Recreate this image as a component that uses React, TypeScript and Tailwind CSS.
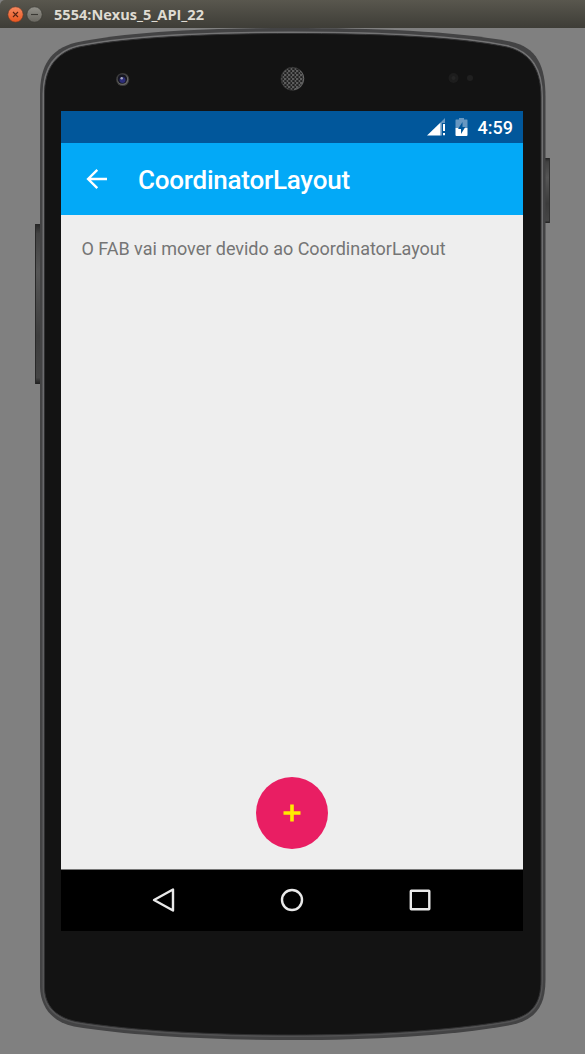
import type { ReactNode } from "react";

const BODY =
  "M40 94 C40 66 50 49 76 42.500 C130 31 215 28 292 28 C370 28 455 31 510 41.5 C537 47 545.5 66 545.5 97 V980 C545.5 1008 534 1020 511 1025 C450 1036 370 1040 292 1040 C214 1040 130 1036 74 1026.5 C52 1022 40.500 1007 40 987 Z";
const FACE =
  "M44.5 94 C44.5 71 54 53 79 47 C132 36.500 215 33.5 292 33.5 C370 33.5 453 36 507 47 C532 53 541 72 541 97 V980 C541 1005 531 1015.500 509 1020.500 C449 1031 370 1035 292 1035 C214 1035 132 1031 76 1021.500 C55 1017 44.500 1005 44.500 987 Z";

function DeviceShell() {
  return (
    <svg
      className="absolute left-0 top-0"
      width="585"
      height="1054"
      viewBox="0 0 585 1054"
      aria-hidden="true"
    >
      <defs>
        <linearGradient id="key" x1="0" y1="0" x2="0" y2="1">
          <stop offset="0" stopColor="#252525" />
          <stop offset=".06" stopColor="#424242" />
          <stop offset=".3" stopColor="#565656" />
          <stop offset=".7" stopColor="#3c3c3c" />
          <stop offset=".96" stopColor="#454545" />
          <stop offset="1" stopColor="#1f1f1f" />
        </linearGradient>
        <linearGradient id="rim" x1="0" y1="0" x2="0" y2="1">
          <stop offset="0" stopColor="#737374" />
          <stop offset=".4" stopColor="#69696c" />
          <stop offset="1" stopColor="#525253" />
        </linearGradient>
        <pattern id="mesh" width="4" height="4" patternUnits="userSpaceOnUse">
          <rect width="4" height="4" fill="#5c5c5c" />
          <rect x=".3" y=".3" width="2.300" height="1.500" fill="#101010" />
          <rect x="2.300" y="2.300" width="1.700" height="1.500" fill="#101010" />
        </pattern>
      </defs>
      <rect x="35" y="224" width="6" height="160" fill="url(#key)" />
      <rect x="35" y="224" width="1" height="160" fill="#292929" />
      <rect x="545" y="158" width="5" height="65" fill="url(#key)" />
      <rect x="549" y="158" width="1" height="65" fill="#303030" />
      <path d={BODY} fill="#434344" />
      <path d={FACE} fill="#131313" stroke="url(#rim)" strokeWidth="4" />
      <path d={FACE} fill="#131313" stroke="#303031" strokeWidth="1" />

      <circle cx="122.700" cy="79.500" r="6.600" fill="#3d3c3b" />
      <circle cx="122.700" cy="79.500" r="5.500" fill="#686765" />
      <circle cx="122.300" cy="79" r="4.800" fill="#171722" />
      <circle cx="122.500" cy="79.900" r="3" fill="#2d2d78" />
      <circle cx="121.700" cy="78.200" r="1.200" fill="#a6a8bd" />

      <circle cx="292.500" cy="78.800" r="11.500" fill="url(#mesh)" stroke="#353535" strokeWidth=".8" />
      <path d="M300 70.500 A11 11 0 0 1 294 89.500" fill="none" stroke="#777" strokeWidth=".8" />
      <circle cx="453.500" cy="78" r="5" fill="#1d1d1d" />
      <circle cx="453.500" cy="78" r="2" fill="#252525" />
      <circle cx="470" cy="78" r="3" fill="#202020" />
    </svg>
  );
}

function WindowButton({ close = false }: { close?: boolean }) {
  return (
    <svg width="17" height="17" viewBox="0 0 17 17">
      <defs>
        <linearGradient id={close ? "closeFill" : "minFill"} x1="0" y1="0" x2="0" y2="1">
          <stop stopColor={close ? "#f68a61" : "#92918a"} />
          <stop offset="1" stopColor={close ? "#e9561f" : "#696760"} />
        </linearGradient>
      </defs>
      <circle
        cx="8.500"
        cy="8.500"
        r="7.700"
        fill={close ? "url(#closeFill)" : "url(#minFill)"}
        stroke={close ? "#5d3526" : "#36352f"}
        strokeWidth=".6"
      />
      <path
        d={close ? "M6 6 L11 11 M11 6 L6 11" : "M5 8.500 H12"}
        stroke={close ? "#572413" : "#3a3934"}
        strokeWidth="1.100"
      />
    </svg>
  );
}

function NavButton({ label, children }: { label: string; children: ReactNode }) {
  return (
    <button aria-label={label} className="flex h-full w-32 items-center justify-center">
      <svg
        width="26"
        height="26"
        viewBox="0 0 26 26"
        fill="none"
        stroke="#e9e9e9"
        strokeWidth="2.400"
        strokeLinejoin="round"
      >
        {children}
      </svg>
    </button>
  );
}

export default function App() {
  return (
    <div className="relative h-[1054px] w-[585px] overflow-hidden bg-[#808080]">
      <DeviceShell />
      <div className="relative flex h-full flex-col">
        <header className="flex h-7 shrink-0 items-center gap-[2px] rounded-tl-[5px] bg-linear-to-b from-[#59574e] to-[#3e3d37] pl-[7px] pt-px">
          <WindowButton close />
          <WindowButton />
          <h1 className="ml-[9px] font-['Open_Sans',sans-serif] text-[14px] font-bold leading-7 text-[#dfdbd2]">
            <svg width="151" height="20" viewBox="0 0 151 20" className="block overflow-visible">
              <text x="0" y="15" textLength="150" lengthAdjust="spacingAndGlyphs" fill="currentColor">
                5554:Nexus_5_API_22
              </text>
            </svg>
          </h1>
        </header>

        <main className="ml-[61px] mt-[83px] flex h-[820px] w-[462px] flex-col bg-[#eeeeee] font-[Roboto,sans-serif]">
          <div className="flex h-8 shrink-0 items-center justify-end bg-[#01579b] pr-[10px] text-white">
            <svg width="20" height="18" viewBox="0 0 20 18">
              <path d="M13.500 4.500 L18 0 V5 H15 V17.500 H13.500 Z" fill="#6797c1" />
              <path d="M0 17.500 L13.500 4.500 V17.500 Z" fill="#fff" />
              <path d="M16 6 H18 V13 H16 Z M16 15 H18 V17.300 H16 Z" fill="#fff" />
            </svg>
            <svg width="13" height="20" viewBox="0 0 13 20" className="ml-[8px] mr-px">
              <path d="M4 1 H9 V2.500 H12 Q12.500 2.500 12.500 3.500 V11 H.5 V3.500 Q.5 2.500 1 2.500 H4 Z" fill="#6797c1" />
              <path d="M.5 11 H12.500 V18 Q12.500 19 11.500 19 H1.500 Q.5 19 .5 18 Z" fill="#fff" />
              <path d="M7.500 5 L3 12 H6 V17 L10.300 10 H7.500 Z" fill="#01579b" />
            </svg>
            <time className="ml-[9px] pt-px text-[18px] font-medium leading-8">4:59</time>
          </div>

          <div className="flex h-[72px] shrink-0 items-center bg-[#03a9f7] text-white">
            <button aria-label="Back" className="ml-[25px] flex h-9 w-[22px] items-center">
              <svg width="22" height="22" viewBox="0 0 22 22" fill="none" stroke="#fff" strokeWidth="2.400">
                <path d="M21 11 H3 M11.300 1.800 L2.100 11 L11.300 20.200" />
              </svg>
            </button>
            <h2 className="ml-[30px] pt-[2px] text-[26px] font-medium leading-9 tracking-[-0.23px]">
              CoordinatorLayout
            </h2>
          </div>

          <section className="flex min-h-0 flex-1 flex-col items-center justify-between pb-5 pt-[22px]">
            <p className="w-full pl-[20.5px] text-[18px] leading-6 tracking-[-0.02px] text-[#757575]">
              O FAB vai mover devido ao CoordinatorLayout
            </p>
            <button
              aria-label="Add"
              className="flex size-[72px] items-center justify-center rounded-full bg-[#e91e63]"
            >
              <svg width="18" height="18" viewBox="0 0 18 18">
                <path d="M7.200 .5 H10.800 V7.200 H17.500 V10.800 H10.800 V17.500 H7.200 V10.800 H.5 V7.200 H7.200 Z" fill="#ffeb00" />
              </svg>
            </button>
          </section>

          <nav className="flex h-[62px] shrink-0 items-center justify-center border-t border-[#777777] bg-black pb-px">
            <NavButton label="Back">
              <path d="M22 2.500 V23.500 L3 13 Z" />
            </NavButton>
            <NavButton label="Home">
              <circle cx="13" cy="13" r="10" />
            </NavButton>
            <NavButton label="Recent apps">
              <rect x="3.800" y="3.800" width="18.500" height="18.500" rx=".5" />
            </NavButton>
          </nav>
        </main>
      </div>
    </div>
  );
}
